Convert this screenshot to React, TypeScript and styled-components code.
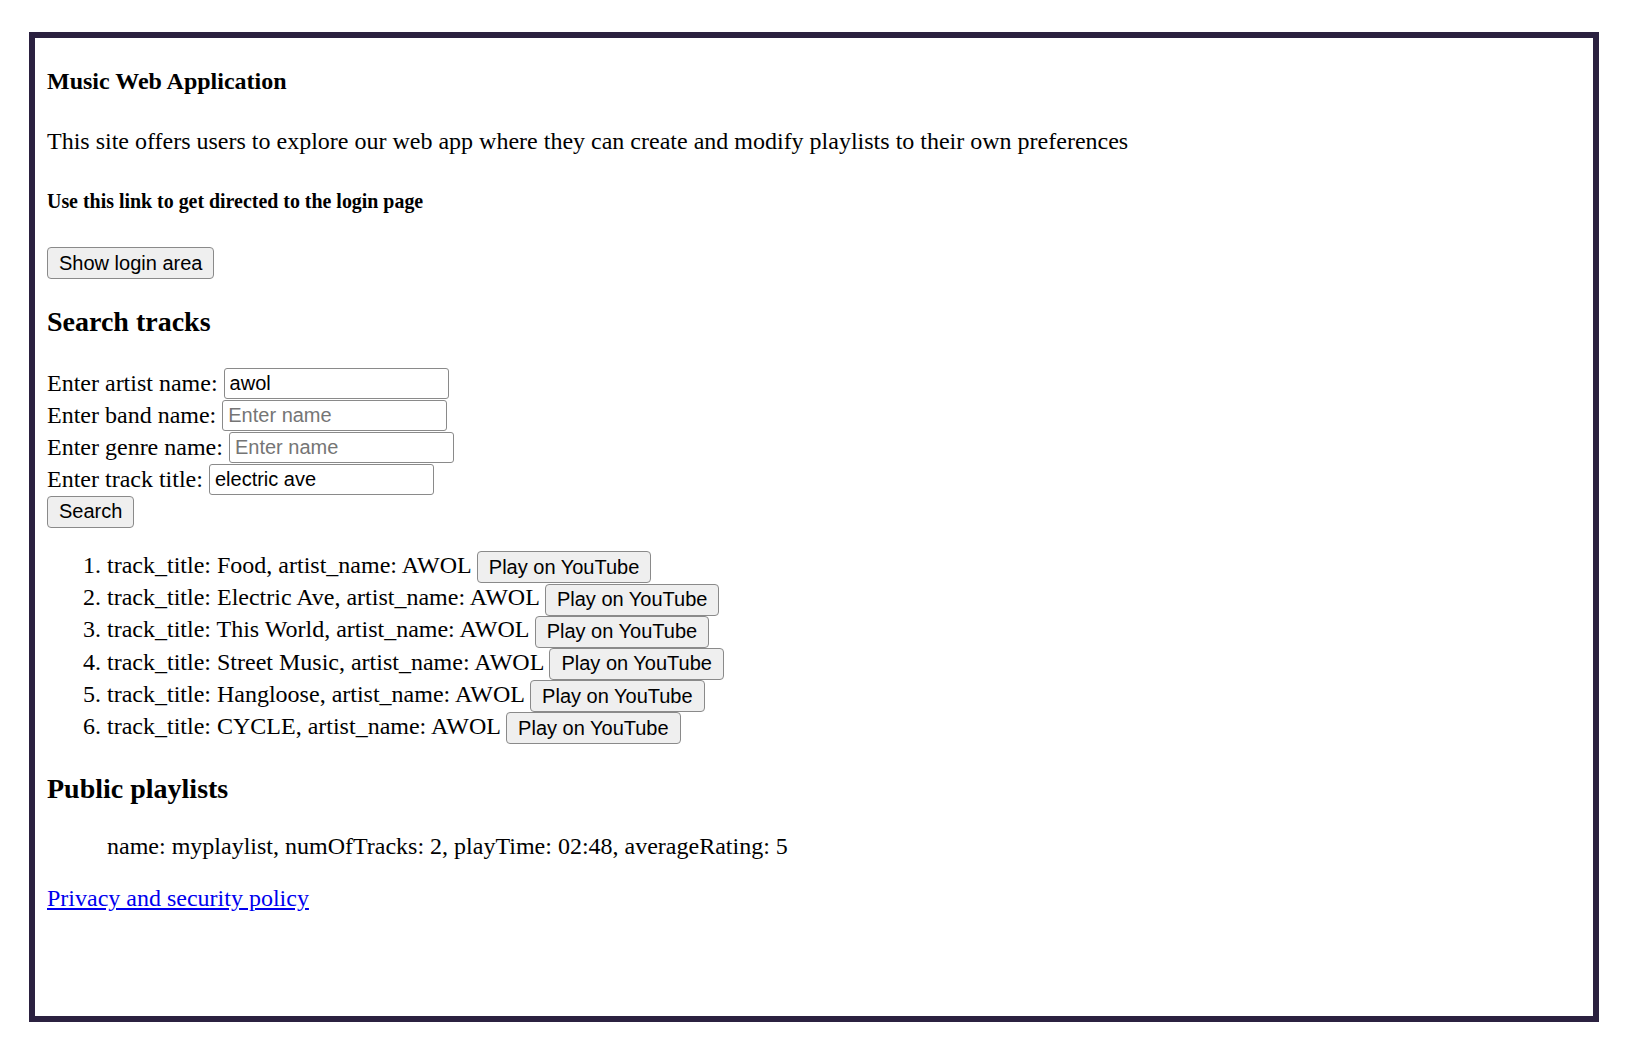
import React from 'react';
import styled, { createGlobalStyle } from 'styled-components';

const GlobalStyle = createGlobalStyle`
  html, body {
    margin: 0;
    padding: 0;
    background: #ffffff;
  }
  body {
    font-family: "Liberation Serif", "Times New Roman", serif;
    color: #000;
  }
`;

const tracks = ['Food', 'Electric Ave', 'This World', 'Street Music', 'Hangloose', 'CYCLE'];

const fields = [
  { label: 'Enter artist name:', value: 'awol' },
  { label: 'Enter band name:', value: '' },
  { label: 'Enter genre name:', value: '' },
  { label: 'Enter track title:', value: 'electric ave' },
];

const App = () => {
  return (
    <>
      <GlobalStyle />
      <Page>
        <Frame>
          <Title>Music Web Application</Title>
          <Intro>
            This site offers users to explore our web app where they can create and modify playlists to
            their own preferences
          </Intro>
          <SubTitle>Use this link to get directed to the login page</SubTitle>
          <div>
            <NativeButton type="button">Show login area</NativeButton>
          </div>

          <Section $top={27} $bottom={29}>
            Search tracks
          </Section>
          <SearchForm onSubmit={(e) => e.preventDefault()}>
            {fields.map((field) => (
              <FieldRow key={field.label}>
                <FieldLabel>{field.label}</FieldLabel>
                <TextInput type="text" defaultValue={field.value} placeholder="Enter name" />
              </FieldRow>
            ))}
            <FieldRow>
              <NativeButton type="submit">Search</NativeButton>
            </FieldRow>
          </SearchForm>

          <TrackList>
            {tracks.map((title) => (
              <TrackItem key={title}>
                track_title: {title}, artist_name: AWOL <NativeButton type="button">Play on YouTube</NativeButton>
              </TrackItem>
            ))}
          </TrackList>

          <Section $top={31} $bottom={28}>
            Public playlists
          </Section>
          <PlaylistList>
            <li>name: myplaylist, numOfTracks: 2, playTime: 02:48, averageRating: 5</li>
          </PlaylistList>

          <FooterLine>
            <PolicyLink href="#privacy">Privacy and security policy</PolicyLink>
          </FooterLine>
        </Frame>
      </Page>
    </>
  );
};

export default App;

const Page = styled.div`
  padding: 32px 38px 36px 29px;
`;

const Frame = styled.div`
  box-sizing: border-box;
  height: 990px;
  border: 6px solid #2b2140;
  padding: 0 12px;
  font-size: 24px;
  overflow: hidden;
`;

const Title = styled.h4`
  font-size: 24px;
  font-weight: bold;
  margin: 30px 0 33px;
`;

const Intro = styled.p`
  margin: 33px 0 24px;
`;

const SubTitle = styled.h5`
  font-size: 19.92px;
  font-weight: bold;
  margin: 35px 0 34px;
`;

const Section = styled.h3<{ $top: number; $bottom: number }>`
  font-size: 28px;
  font-weight: bold;
  margin: ${(p) => p.$top}px 0 ${(p) => p.$bottom}px;
`;

const NativeButton = styled.button`
  box-sizing: border-box;
  height: 32px;
  padding: 1px 11px;
  font-family: "Liberation Sans", Arial, sans-serif;
  font-size: 20px;
  color: #000;
  background: #efefef;
  border: 1.5px solid #8a8a8a;
  border-radius: 4px;
  vertical-align: middle;
`;

const SearchForm = styled.form`
  display: flex;
  flex-direction: column;
`;

const FieldRow = styled.div`
  display: flex;
  align-items: center;
  gap: 6px;
  height: 32.2px;
`;

const FieldLabel = styled.span`
  white-space: nowrap;
`;

const TextInput = styled.input`
  box-sizing: border-box;
  width: 225px;
  height: 31px;
  padding: 1px 5px;
  font-family: "Liberation Sans", Arial, sans-serif;
  font-size: 20px;
  color: #000;
  background: #fff;
  border: 1.5px solid #8a8a8a;
  border-radius: 3px;
  &::placeholder {
    color: #757575;
  }
`;

const TrackList = styled.ol`
  margin: 21px 0 28px;
  padding-left: 60px;
`;

const TrackItem = styled.li`
  height: 32.2px;
  line-height: 32px;
`;

const PlaylistList = styled.ul`
  list-style: none;
  margin: 24px 0;
  padding-left: 60px;
`;

const FooterLine = styled.p`
  margin: 25px 0;
`;

const PolicyLink = styled.a`
  color: #0000ee;
  text-decoration: underline;
`;
